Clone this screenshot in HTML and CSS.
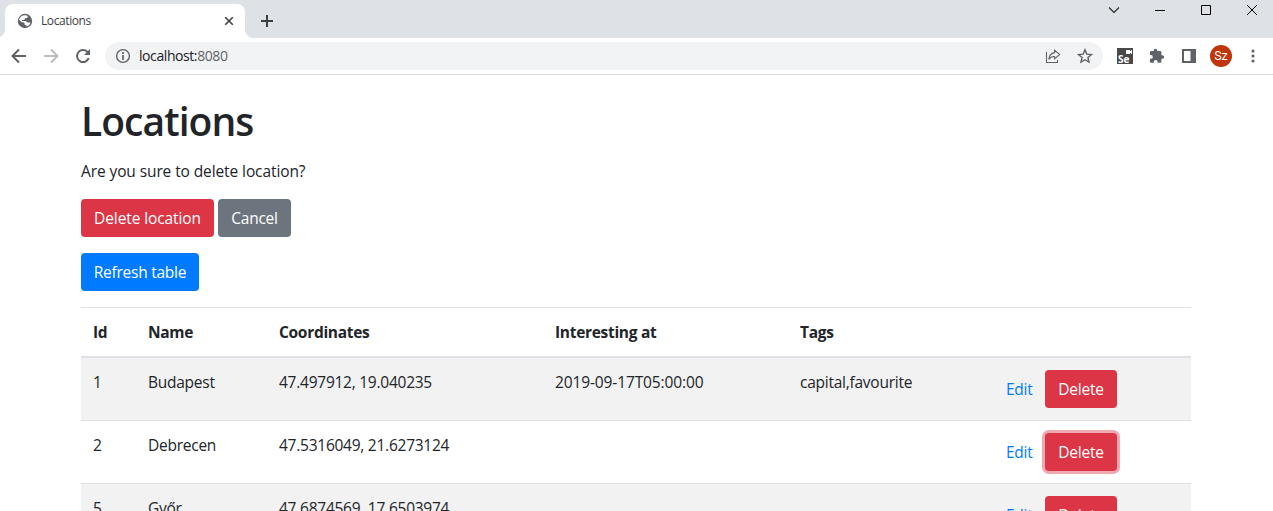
FILE: index.html
```html
<!DOCTYPE html>
<html lang="en">
<head>
<meta charset="utf-8">
<title>Locations</title>
<link rel="stylesheet" href="styles.css">
</head>
<body>
<header class="browser">
  <div class="tabstrip">
    <div class="tab">
      <svg class="globe" width="16" height="16" viewBox="0 0 16 16"><circle cx="8" cy="8" r="7.2" fill="#5f6368"/><path d="M8.8 2.2 10.8 3 10.2 5 8 5.2 7.2 7H5.1V8.1H8.9L10.2 9.5H13.5C13.1 11.7 11.5 13.2 9.4 13.6V12.1H7.7V10.5L6.3 9.3H4.7L2.1 6.8C2.6 4 5.2 1.9 8.8 2.2Z" fill="#fff"/></svg>
      <span class="tab-title">Locations</span>
      <svg class="tab-close" width="10" height="10" viewBox="0 0 10 10"><path d="m1.2 1.2 7.6 7.6m0-7.6L1.2 8.8" stroke="#3c4043" stroke-width="1.6"/></svg>
    </div>
    <svg class="new-tab" width="14" height="14" viewBox="0 0 14 14"><path d="M7 1v12M1 7h12" stroke="#3c4043" stroke-width="2"/></svg>
    <div class="window-controls">
      <svg width="12" height="12" viewBox="0 0 12 12"><path d="m1 3.5 5 5 5-5" fill="none" stroke="#222" stroke-width="1.1"/></svg>
      <svg width="12" height="12" viewBox="0 0 12 12"><path d="M1 6.5h10" stroke="#000"/></svg>
      <svg width="12" height="12" viewBox="0 0 12 12"><path d="M1.5 1.5h9v9h-9z" fill="none" stroke="#000"/></svg>
      <svg width="12" height="12" viewBox="0 0 12 12"><path d="m1 1 10 10m0-10L1 11" stroke="#000"/></svg>
    </div>
  </div>
  <div class="toolbar">
    <svg class="nav" width="16" height="16" viewBox="0 0 16 16"><path d="M15 8H2.5M8 1.5 1.5 8 8 14.5" fill="none" stroke="#5f6368" stroke-width="2"/></svg>
    <svg class="nav" width="16" height="16" viewBox="0 0 16 16"><path d="M1 8h12.5M8 1.5 14.5 8 8 14.5" fill="none" stroke="#babcbe" stroke-width="2"/></svg>
    <svg class="nav" width="16" height="16" viewBox="0 0 16 16"><path d="M13.7 10.2A6 6 0 1 1 12.3 3.8L14 5.5" fill="none" stroke="#5f6368" stroke-width="2"/><path d="M15 1v6H9z" fill="#5f6368"/></svg>
    <div class="address">
      <svg width="16" height="16" viewBox="0 0 16 16"><circle cx="8" cy="8" r="6.4" fill="none" stroke="#5f6368" stroke-width="1.4"/><path d="M8 7v5M8 4v2" stroke="#5f6368" stroke-width="1.7"/></svg>
      <span class="url">localhost:<span class="port">8080</span></span>
      <svg class="share" width="16" height="16" viewBox="0 0 16 16"><path d="M1.5 4v10.5h11V12M9.6 2.2l5 4.3-5 4.3V8.5C7 8.3 5.2 9.2 3.8 11.4 4.1 7.8 6.2 5.1 9.6 4.6z" fill="none" stroke="#5f6368" stroke-width="1.1"/></svg>
      <svg width="16" height="16" viewBox="0 0 16 16"><path d="m8 1.8 1.8 4.3 4.7.4-3.6 3 1.1 4.6L8 11.7l-4 2.4 1.1-4.6-3.6-3 4.7-.4z" fill="none" stroke="#5f6368" stroke-width="1.4"/></svg>
    </div>
    <div class="extensions">
      <div class="selenium"><svg class="camera" width="6" height="4" viewBox="0 0 6 4"><path d="M0 0h4v1l2-1v4L4 3v1H0z" fill="#fff"/></svg><span>Se</span></div>
      <svg width="16" height="16" viewBox="0 0 16 16"><path d="M13.4 7.3H12.4V4.5c0-.8-.6-1.4-1.4-1.4H8.3V2.5a1.8 1.8 0 0 0-3.6 0v.6H2.2C1.4 3.1.9 3.7.9 4.5V7h1a1.9 1.9 0 0 1 0 3.8h-1v2.6c0 .8.5 1.4 1.3 1.4h2.6v-1a1.9 1.9 0 0 1 3.8 0v1H11c.8 0 1.4-.6 1.4-1.4v-2.6h1a1.75 1.75 0 0 0 0-3.5z" fill="#5f6368"/></svg>
      <svg width="16" height="16" viewBox="0 0 16 16"><path d="M1 1h14v14H1zm2 2v10h6.5V3z" fill="#5f6368" fill-rule="evenodd"/></svg>
      <span class="avatar">Sz</span>
      <svg class="menu" width="4" height="14" viewBox="0 0 4 14"><g fill="#5f6368"><circle cx="2" cy="2" r="1.55"/><circle cx="2" cy="7" r="1.55"/><circle cx="2" cy="12" r="1.55"/></g></svg>
    </div>
  </div>
</header>
<main class="container">
  <h1>Locations</h1>
  <p class="question">Are you sure to delete location?</p>
  <div class="actions">
    <button class="btn btn-danger btn-confirm">Delete location</button>
    <button class="btn btn-secondary">Cancel</button>
  </div>
  <div class="actions">
    <button class="btn btn-primary">Refresh table</button>
  </div>
  <table class="table">
    <colgroup><col class="c-id"><col class="c-name"><col class="c-coords"><col class="c-date"><col class="c-tags"><col></colgroup>
    <thead><tr><th>Id</th><th>Name</th><th>Coordinates</th><th>Interesting at</th><th>Tags</th><th></th></tr></thead>
    <tbody>
      <tr><td>1</td><td>Budapest</td><td>47.497912, 19.040235</td><td class="date">2019-09-17T05:00:00</td><td>capital,favourite</td><td><div class="row-actions"><a>Edit</a><button class="btn btn-danger">Delete</button></div></td></tr>
      <tr><td>2</td><td>Debrecen</td><td>47.5316049, 21.6273124</td><td></td><td></td><td><div class="row-actions"><a>Edit</a><button class="btn btn-danger focused">Delete</button></div></td></tr>
      <tr><td>5</td><td>Győr</td><td>47.6874569, 17.6503974</td><td></td><td></td><td><div class="row-actions"><a>Edit</a><button class="btn btn-danger">Delete</button></div></td></tr>
    </tbody>
  </table>
</main>
</body>
</html>
```

FILE: styles.css
```css
* { box-sizing: border-box; }
body {
  margin: 0;
  height: 511px;
  overflow: hidden;
  background: #fff;
  color: #212529;
  font: 15.5px/24px "Open Sans", "Noto Sans", sans-serif;
  letter-spacing: -0.25px;
}
svg { display: block; flex: none; }
.browser { height: 75px; border-bottom: 1px solid #dadce0; }
.tabstrip { display: flex; height: 38px; padding: 4px 15px 0 5px; background: #dee1e6; }
.tab {
  position: relative;
  display: flex;
  align-items: center;
  width: 240px;
  height: 34px;
  padding: 0 11px 0 12px;
  border-radius: 8px 8px 0 0;
  background: #fff;
}
.tab::before, .tab::after {
  content: "";
  position: absolute;
  bottom: 0;
  width: 8px;
  height: 8px;
}
.tab::before { left: -8px; background: radial-gradient(circle at 0 0, transparent 7.5px, #fff 8px); }
.tab::after { right: -8px; background: radial-gradient(circle at 100% 0, transparent 7.5px, #fff 8px); }
.tab-title { flex: 1; margin-left: 8px; color: #3c4043; font-size: 12px; letter-spacing: -0.4px; }
.new-tab { margin: 10px 0 0 15px; }
.window-controls { display: flex; gap: 34px; margin-left: auto; }
.toolbar { display: flex; align-items: center; height: 36px; padding: 0 17px 0 11px; }
.nav { margin-right: 16px; }
.address {
  display: flex;
  align-items: center;
  width: 998px;
  height: 28px;
  margin-left: -2px;
  padding: 0 10px;
  border-radius: 14px;
  background: #f1f3f4;
}
.url { margin-left: 8px; color: #202124; font-size: 14px; letter-spacing: -0.42px; }
.port { color: #5f6368; }
.share { margin: 0 16px 0 auto; }
.extensions { display: flex; align-items: center; gap: 16px; margin-left: 14px; }
.selenium {
  display: flex;
  flex-direction: column;
  justify-content: space-between;
  width: 16px;
  height: 16px;
  padding: 2px 1px 0;
  background: #494949;
  color: #fff;
  font: bold 10px/9px "Open Sans", sans-serif;
  letter-spacing: 0;
}
.camera { align-self: flex-end; }
.avatar {
  width: 22px;
  height: 22px;
  margin: 0 -3px;
  border-radius: 50%;
  background: #bf360c;
  color: #fff;
  font: 12.5px/22px Roboto, sans-serif;
  letter-spacing: 0;
  text-align: center;
}
.menu { margin-left: 6px; }
.container { width: 1110px; margin-left: 81px; padding-top: 22px; }
h1 { margin: 0 0 14px; font-size: 39px; font-weight: 600; line-height: 48px; letter-spacing: -0.95px; }
.question { margin: 0 0 16px; letter-spacing: -0.1px; }
.actions { display: flex; gap: 4px; margin-bottom: 16px; }
.btn {
  flex: none;
  width: 72px;
  height: 38px;
  padding: 0;
  border: 0;
  border-radius: 4px;
  color: #fff;
  font: inherit;
  letter-spacing: inherit;
}
.btn-danger { background: #dc3545; }
.btn-confirm { width: 133px; letter-spacing: -0.1px; }
.btn-secondary { width: 73px; background: #6c757d; }
.btn-primary { width: 118px; background: #007bff; }
.focused { box-shadow: 0 0 0 3px rgba(225, 83, 97, .5); }
.table { width: 1110px; table-layout: fixed; border-spacing: 0; }
.c-id { width: 55px; }
.c-name { width: 131px; }
.c-coords { width: 276px; }
.c-date { width: 245px; }
.c-tags { width: 206px; }
th, td { padding: 12px; border-top: 1px solid #dee2e6; text-align: left; vertical-align: top; }
th { height: 51px; border-bottom: 2px solid #dee2e6; letter-spacing: -0.3px; }
td { height: 63px; }
.date { letter-spacing: -0.12px; }
tbody tr:first-child td { height: 62px; border-top: 0; }
tbody tr:nth-child(odd) { background: #f2f2f2; }
.row-actions { display: flex; align-items: center; gap: 12px; height: 38px; }
.row-actions a { width: 27px; color: #007bff; }
```
